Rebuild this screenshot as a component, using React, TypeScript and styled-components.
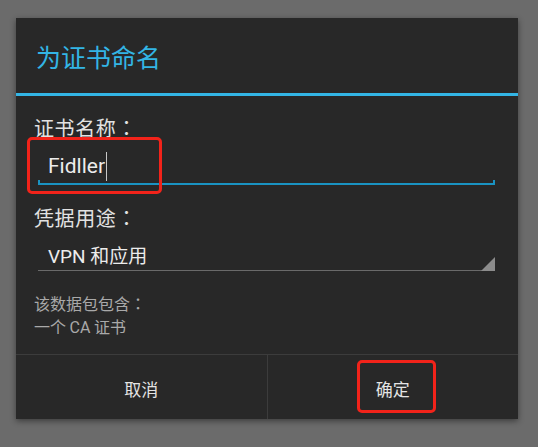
import React from "react";
import styled, { createGlobalStyle } from "styled-components";

const GlobalStyle = createGlobalStyle`
  html, body {
    margin: 0;
    padding: 0;
    background: #6b6b6b;
  }
  body {
    font-family: Roboto, "Noto Sans CJK SC", sans-serif;
  }
`;

const cjk = `"Noto Sans CJK SC", Roboto, sans-serif`;
const latin = `Roboto, "Noto Sans CJK SC", sans-serif`;

const Page = styled.div`
  width: 538px;
  height: 447px;
  padding: 18px 0 0 16px;
  box-sizing: border-box;
`;

const Dialog = styled.div`
  position: relative;
  width: 502px;
  height: 401px;
  background: #282828;
  box-shadow: 0 2px 6px rgba(0, 0, 0, 0.45);
  display: flex;
  flex-direction: column;
`;

const TitleBar = styled.div`
  height: 75px;
  display: flex;
  align-items: center;
  padding-left: 20px;
  font-family: ${cjk};
  font-size: 25px;
  color: #33b5e5;
  border-bottom: 3px solid #33b5e5;
`;

const Body = styled.div`
  flex: 1;
  display: flex;
  flex-direction: column;
  padding: 18px 23px 0 18px;
`;

const Label = styled.div<{ $gap?: number }>`
  font-family: ${cjk};
  font-size: 20px;
  line-height: 28px;
  letter-spacing: 0.6px;
  color: #e2e2e2;
  margin-top: ${(p) => p.$gap ?? 0}px;
`;

const Colon = styled.span`
  font-family: "Noto Sans CJK JP", "Noto Sans CJK SC", sans-serif;
`;

const Field = styled.div`
  margin: 10px 0 0 4px;
  display: flex;
  flex-direction: column;
`;

const FieldText = styled.div`
  font-family: ${latin};
  font-size: 21px;
  line-height: 28px;
  height: 28px;
  color: #ececec;
  padding-left: 10px;
  display: flex;
  align-items: flex-start;
`;

const Caret = styled.span`
  display: inline-block;
  width: 1px;
  height: 29px;
  margin-left: 1px;
  background: #c8c8c8;
`;

const FieldLine = styled.div`
  height: 3px;
  border: 2px solid #1a93c2;
  border-top: none;
`;

const Spinner = styled.div`
  margin: 12px 0 0 4px;
  display: flex;
  justify-content: space-between;
  align-items: flex-end;
  border-bottom: 1px solid #6a6a6a;
`;

const SpinnerText = styled.span`
  font-family: ${latin};
  font-size: 19px;
  line-height: 26px;
  color: #ececec;
  padding-left: 10px;
`;

const Corner = styled.span`
  width: 0;
  height: 0;
  border-left: 14px solid transparent;
  border-bottom: 14px solid #8c8c8c;
  margin-bottom: -1px;
`;

const Info = styled.div`
  margin-top: 21px;
  font-family: ${cjk};
  font-size: 16px;
  line-height: 23px;
  color: #a9a9a9;
`;

const InfoLatin = styled.span`
  font-family: ${latin};
`;

const ButtonBar = styled.div`
  height: 65px;
  box-sizing: border-box;
  border-top: 1px solid #3c3c3c;
  display: flex;
`;

const Button = styled.div<{ $divider?: boolean }>`
  flex: 1;
  display: flex;
  align-items: center;
  justify-content: center;
  padding-top: 3px;
  font-family: ${cjk};
  font-size: 17px;
  color: #e4e4e4;
  border-right: ${(p) => (p.$divider ? "1px solid #3c3c3c" : "none")};
`;

const Highlight = styled.div<{ $left: number; $top: number; $w: number; $h: number }>`
  position: absolute;
  left: ${(p) => p.$left}px;
  top: ${(p) => p.$top}px;
  width: ${(p) => p.$w}px;
  height: ${(p) => p.$h}px;
  box-sizing: border-box;
  border: 3px solid #f2231a;
  border-radius: 5px;
  pointer-events: none;
`;

export default function App() {
  return (
    <>
      <GlobalStyle />
      <Page>
        <Dialog>
          <TitleBar>为证书命名</TitleBar>
          <Body>
            <Label>
              证书名称<Colon>：</Colon>
            </Label>
            <Field>
              <FieldText>
                Fidller
                <Caret />
              </FieldText>
              <FieldLine />
            </Field>
            <Label $gap={19}>
              凭据用途<Colon>：</Colon>
            </Label>
            <Spinner>
              <SpinnerText>VPN 和应用</SpinnerText>
              <Corner />
            </Spinner>
            <Info>
              该数据包包含<Colon>：</Colon>
              <br />
              一个 <InfoLatin>CA</InfoLatin> 证书
            </Info>
          </Body>
          <ButtonBar>
            <Button $divider>取消</Button>
            <Button>确定</Button>
          </ButtonBar>
          <Highlight $left={11} $top={119} $w={135} $h={57} />
          <Highlight $left={341} $top={342} $w={79} $h={53} />
        </Dialog>
      </Page>
    </>
  );
}
